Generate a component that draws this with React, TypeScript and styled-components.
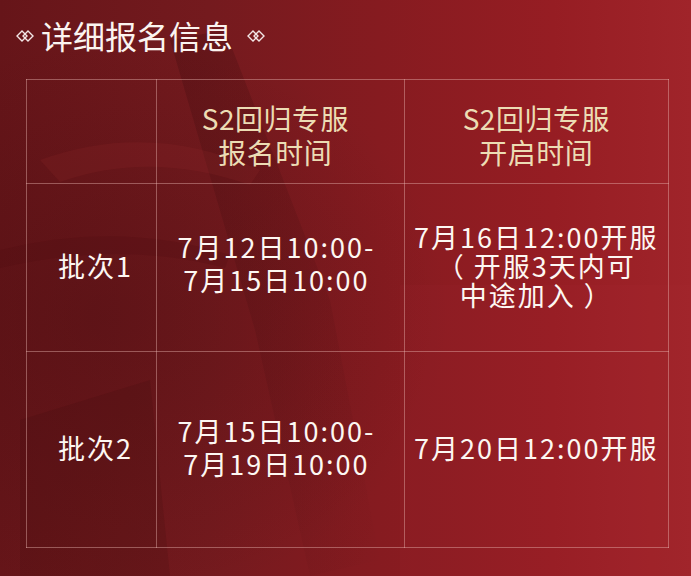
import styled, { createGlobalStyle } from "styled-components";

const GlobalStyle = createGlobalStyle`
  html, body {
    margin: 0;
    padding: 0;
    background: #6e171b;
  }
  body {
    font-family: "Noto Sans CJK SC", "Noto Sans", sans-serif;
  }
`;

const rows = [
  {
    batch: "批次1",
    signup: ["7月12日10:00-", "7月15日10:00"],
    open: ["7月16日12:00开服", "（ 开服3天内可", "中途加入 ）"],
    height: 168,
  },
  {
    batch: "批次2",
    signup: ["7月15日10:00-", "7月19日10:00"],
    open: ["7月20日12:00开服"],
    height: 196,
  },
];

export default function App() {
  return (
    <>
      <GlobalStyle />
      <Page>
        <Backdrop viewBox="0 0 691 576" preserveAspectRatio="none" aria-hidden>
          <defs>
            <linearGradient id="spear" x1="0" y1="0" x2="1" y2="1">
              <stop offset="0" stopColor="#3a0a0c" stopOpacity="0.28" />
              <stop offset="1" stopColor="#3a0a0c" stopOpacity="0" />
            </linearGradient>
            <radialGradient id="shade" cx="0.15" cy="0.55" r="0.5">
              <stop offset="0" stopColor="#3c0a0d" stopOpacity="0.3" />
              <stop offset="1" stopColor="#3c0a0d" stopOpacity="0" />
            </radialGradient>
          </defs>
          <rect x="0" y="0" width="691" height="576" fill="url(#shade)" />
          <path d="M170 40 L225 30 L330 300 L380 560 L310 576 L255 330 Z" fill="url(#spear)" />
          <path d="M40 160 Q150 120 260 170 L250 185 Q150 150 60 182 Z" fill="#a03035" opacity="0.14" />
          <path d="M0 250 Q120 220 230 255 L225 268 Q120 240 0 268 Z" fill="#4a0c10" opacity="0.2" />
          <path d="M20 420 L150 380 L170 576 L20 576 Z" fill="#3a0a0d" opacity="0.16" />
          <path d="M400 285 L691 285 L691 576 L400 576 Z" fill="#c04048" opacity="0.05" />
        </Backdrop>
        <Title>
          <Ornament />
          <TitleText>详细报名信息</TitleText>
          <Ornament $right />
        </Title>
        <Table>
          <colgroup>
            <col style={{ width: 130 }} />
            <col style={{ width: 247 }} />
            <col style={{ width: 264 }} />
          </colgroup>
          <thead>
            <tr style={{ height: 104 }}>
              <HeadCell />
              <HeadCell $shift={-5}>
                S2回归专服
                <br />
                报名时间
              </HeadCell>
              <HeadCell>
                S2回归专服
                <br />
                开启时间
              </HeadCell>
            </tr>
          </thead>
          <tbody>
            {rows.map((r) => (
              <tr key={r.batch} style={{ height: r.height }}>
                <Cell $shift={4}>{r.batch}</Cell>
                <Cell $shift={-4} $lift={r.open.length > 2}>
                  {r.signup.map((l) => (
                    <Line key={l}>{l}</Line>
                  ))}
                </Cell>
                <Cell $tight={r.open.length > 2}>
                  {r.open.map((l) => (
                    <Line key={l}>{l}</Line>
                  ))}
                </Cell>
              </tr>
            ))}
          </tbody>
        </Table>
      </Page>
    </>
  );
}

function Ornament({ $right }: { $right?: boolean }) {
  return (
    <OrnamentSvg $right={$right} width="18" height="12" viewBox="0 0 18 12">
      <path d="M6 1 L11 6 L6 11 L1 6 Z" fill="none" stroke="#f3e6e6" strokeWidth="1.4" />
      <path d="M12 1 L17 6 L12 11 L7 6 Z" fill="none" stroke="#f3e6e6" strokeWidth="1.4" />
    </OrnamentSvg>
  );
}

const Page = styled.div`
  position: relative;
  width: 691px;
  height: 576px;
  overflow: hidden;
  background: linear-gradient(90deg, #661519 0%, #741a1e 30%, #861b20 55%, #961d23 80%, #a0242a 100%);
`;

const Backdrop = styled.svg`
  position: absolute;
  inset: 0;
  width: 100%;
  height: 100%;
  pointer-events: none;
`;

const Title = styled.div`
  position: relative;
  height: 70px;
  display: flex;
  align-items: center;
  padding-left: 16px;
`;

const OrnamentSvg = styled.svg<{ $right?: boolean }>`
  margin-left: ${(p) => (p.$right ? "14px" : "0")};
  margin-right: ${(p) => (p.$right ? "0" : "7px")};
  margin-top: 2px;
`;

const TitleText = styled.h1`
  margin: 0;
  font-size: 32px;
  font-weight: 400;
  color: #fbf4f0;
  line-height: 1;
`;

const Table = styled.table`
  position: relative;
  margin: 9px 0 0 26px;
  width: 643px;
  table-layout: fixed;
  border-collapse: collapse;

  td,
  th {
    border: 1px solid rgba(235, 185, 180, 0.42);
    text-align: center;
    vertical-align: middle;
  }
`;

// $shift nudges the centred text sideways: positive moves right, negative left
const pad = (shift = 0) =>
  shift >= 0 ? `padding-left: ${shift * 2}px; padding-right: 0;` : `padding-left: 0; padding-right: ${-shift * 2}px;`;

const HeadCell = styled.th<{ $shift?: number }>`
  padding-top: 6px;
  padding-bottom: 0;
  ${(p) => pad(p.$shift)}
  font-size: 28px;
  font-weight: 400;
  line-height: 34px;
  color: #ecdcb4;
  letter-spacing: 0.5px;
`;

const Cell = styled.td<{ $tight?: boolean; $lift?: boolean; $shift?: number }>`
  padding-top: 0;
  padding-bottom: ${(p) => (p.$lift ? "10px" : "5px")};
  ${(p) => pad(p.$shift)}
  font-size: 27px;
  line-height: ${(p) => (p.$tight ? "29px" : "33px")};
  color: #fdf7f2;
  letter-spacing: 2px;
`;

const Line = styled.div`
  white-space: nowrap;
`;
